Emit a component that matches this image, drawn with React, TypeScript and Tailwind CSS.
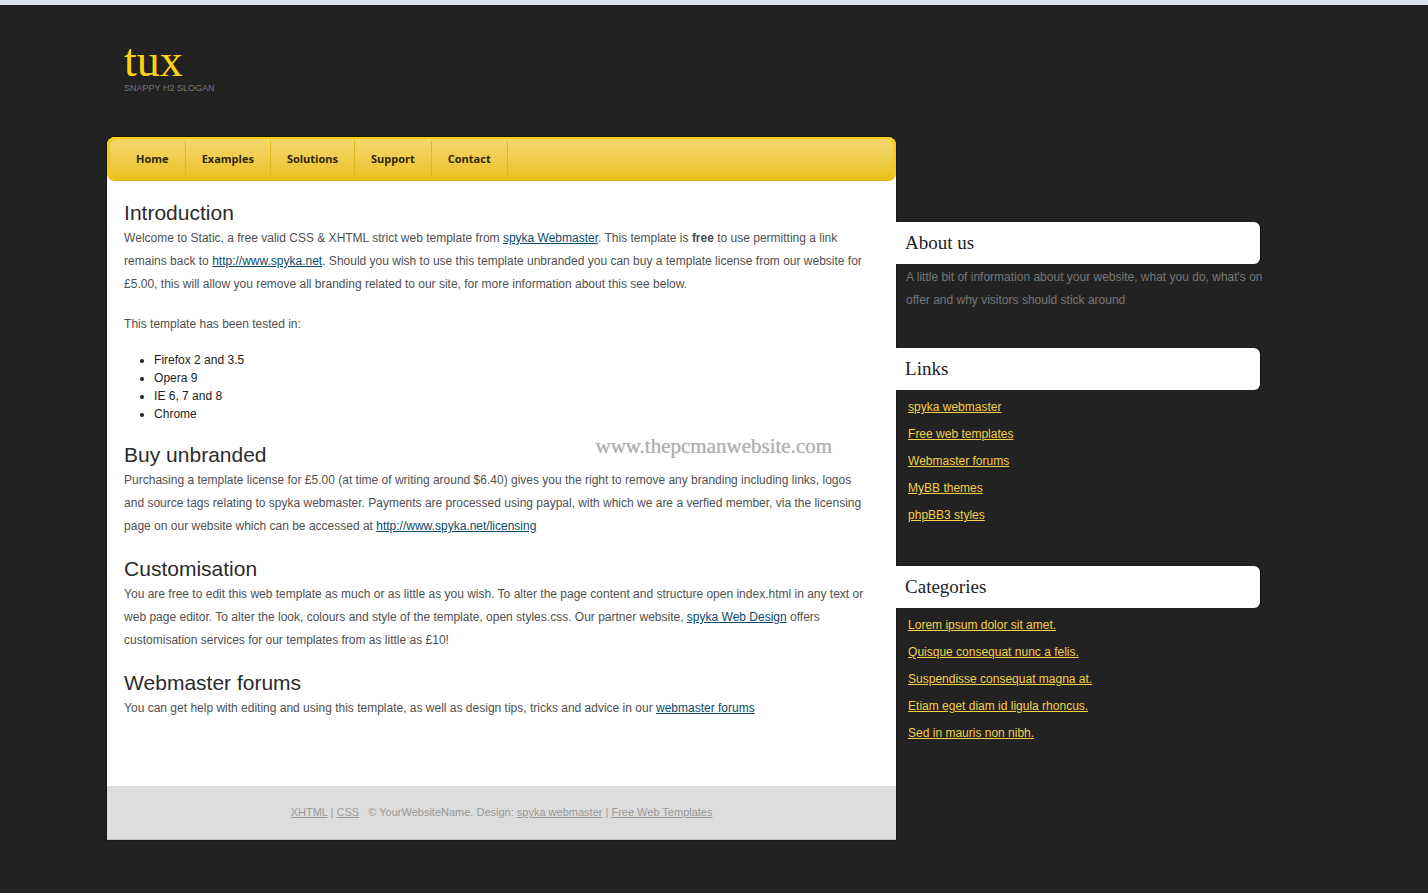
import React from 'react';

type SidebarLink = { label: string; href: string };

const NAV_ITEMS = ['Home', 'Examples', 'Solutions', 'Support', 'Contact'];

const BROWSERS = ['Firefox 2 and 3.5', 'Opera 9', 'IE 6, 7 and 8', 'Chrome'];

const LINKS: SidebarLink[] = [
  { label: 'spyka webmaster', href: '#spyka' },
  { label: 'Free web templates', href: '#templates' },
  { label: 'Webmaster forums', href: '#forums' },
  { label: 'MyBB themes', href: '#mybb' },
  { label: 'phpBB3 styles', href: '#phpbb3' },
];

const CATEGORIES: SidebarLink[] = [
  { label: 'Lorem ipsum dolor sit amet.', href: '#lorem' },
  { label: 'Quisque consequat nunc a felis.', href: '#quisque' },
  { label: 'Suspendisse consequat magna at.', href: '#suspendisse' },
  { label: 'Etiam eget diam id ligula rhoncus.', href: '#etiam' },
  { label: 'Sed in mauris non nibh.', href: '#sed' },
];

const TextLink = ({ children }: { children: React.ReactNode }) => (
  <a href="#link" className="text-[#0b4a6b] underline">{children}</a>
);

const Section = ({ title, children }: { title: string; children: React.ReactNode }) => (
  <section className="mb-[18px]">
    <h2 className="mb-px text-[21px] leading-[26px] text-[#2b2b2b]">{title}</h2>
    {children}
  </section>
);

const Paragraph = ({ children }: { children: React.ReactNode }) => (
  <p className="text-xs leading-[23px] text-[#505050]">{children}</p>
);

const SidebarHeading = ({ children }: { children: React.ReactNode }) => (
  <h3 className="mr-3 rounded-r-md bg-white pl-[9px] font-['Liberation_Serif',serif] text-[19px] leading-[42px] text-[#222222] shadow-[1px_0_1px_#111111]">
    {children}
  </h3>
);

const SidebarList = ({ items }: { items: SidebarLink[] }) => (
  <ul className="mt-1 mb-[37px] pl-3 text-xs leading-[27px]">
    {items.map((item) => (
      <li key={item.label}>
        <a href={item.href} className="text-[#f6d046] underline">{item.label}</a>
      </li>
    ))}
  </ul>
);

const Navigation = () => (
  <nav className="rounded-lg border-t-2 border-b border-t-[#ffd010] border-b-[#d8b21c] bg-linear-to-b from-[#f4d96c] to-[#ebc010] px-[13px] shadow-[inset_3px_0_1px_#f6c915,inset_-3px_0_1px_#f6c915]">
    <ul className="flex pt-0.5 pb-1 font-['Open_Sans',sans-serif] text-[11px] leading-[35px] font-bold text-[#2e2608]">
      {NAV_ITEMS.map((item) => (
        <li key={item} className="border-r border-[#dfb822]">
          <a href={`#${item.toLowerCase()}`} className="block px-4">{item}</a>
        </li>
      ))}
    </ul>
  </nav>
);

const MainContent = () => (
  <main className="relative pt-[19px] pr-6 pb-12 pl-[17px]">
    <Section title="Introduction">
      <Paragraph>
        Welcome to Static, a free valid CSS &amp; XHTML strict web template from <TextLink>spyka Webmaster</TextLink>. This
        template is <strong>free</strong> to use permitting a link remains back to <TextLink>http://www.spyka.net</TextLink>.
        Should you wish to use this template unbranded you can buy a template license from our website for £5.00, this will
        allow you remove all branding related to our site, for more information about this see below.
      </Paragraph>
      <div className="mt-[17px]">
        <Paragraph>This template has been tested in:</Paragraph>
      </div>
      <ul className="mt-[15px] list-disc pb-px pl-[30px] text-xs leading-[18px] text-[#222222]">
        {BROWSERS.map((browser) => (
          <li key={browser}>{browser}</li>
        ))}
      </ul>
    </Section>

    <Section title="Buy unbranded">
      <Paragraph>
        Purchasing a template license for £5.00 (at time of writing around $6.40) gives you the right to remove any branding
        including links, logos and source tags relating to spyka webmaster. Payments are processed using paypal, with which
        we are a verfied member, via the licensing page on our website which can be accessed
        at <TextLink>http://www.spyka.net/licensing</TextLink>
      </Paragraph>
    </Section>

    <Section title="Customisation">
      <Paragraph>
        You are free to edit this web template as much or as little as you wish. To alter the page content and structure open
        index.html in any text or web page editor. To alter the look, colours and style of the template, open styles.css. Our
        partner website, <TextLink>spyka Web Design</TextLink> offers customisation services for our templates from as little
        as £10!
      </Paragraph>
    </Section>

    <Section title="Webmaster forums">
      <Paragraph>
        You can get help with editing and using this template, as well as design tips, tricks and advice in
        our <TextLink>webmaster forums</TextLink>
      </Paragraph>
    </Section>

    {/* watermark */}
    <span className="pointer-events-none absolute top-[253px] right-16 font-['Liberation_Serif',serif] text-[21px] leading-6 text-[#b0b0b0] text-shadow-[0_0_1px_#c4c4c4]">
      www.thepcmanwebsite.com
    </span>
  </main>
);

const Footer = () => (
  <footer className="border-b border-[#c4c4c4] bg-[#dddddd] text-center text-[11px] leading-[53px] text-[#999999]">
    <a href="#xhtml" className="underline">XHTML</a> | <a href="#css" className="underline">CSS</a> &nbsp; © YourWebsiteName.
    Design: <a href="#spyka" className="underline">spyka webmaster</a> | <a href="#templates" className="underline">Free Web Templates</a>
  </footer>
);

function App() {
  return (
    <div className="min-h-screen border-t-[5px] border-[#dce4f2] bg-[#222222] font-['Liberation_Sans',Arial,sans-serif]">
      <div className="mx-auto w-[85%] pb-12">
        <header className="px-[17px] pt-[34px] pb-[43px]">
          <h1 className="font-['Liberation_Serif',serif] text-[46px] leading-[43px] text-[#ffd310]">tux</h1>
          <p className="text-[9px] leading-3 text-[#777777]">SNAPPY H2 SLOGAN</p>
        </header>
        <div className="flex items-start">
          <div className="relative w-[65%] rounded-t-lg bg-white shadow-[0_0_2px_#000000]">
            <Navigation />
            <MainContent />
            <Footer />
          </div>
          <aside className="relative w-[31%] pt-[85px]">
            <SidebarHeading>About us</SidebarHeading>
            <p className="mt-0.5 mb-9 pl-2.5 text-xs leading-[23px] text-[#777777]">
              A little bit of information about your website, what you do, what's on offer and why visitors should stick around
            </p>
            <SidebarHeading>Links</SidebarHeading>
            <SidebarList items={LINKS} />
            <SidebarHeading>Categories</SidebarHeading>
            <SidebarList items={CATEGORIES} />
          </aside>
        </div>
      </div>
    </div>
  );
}

export default App;
